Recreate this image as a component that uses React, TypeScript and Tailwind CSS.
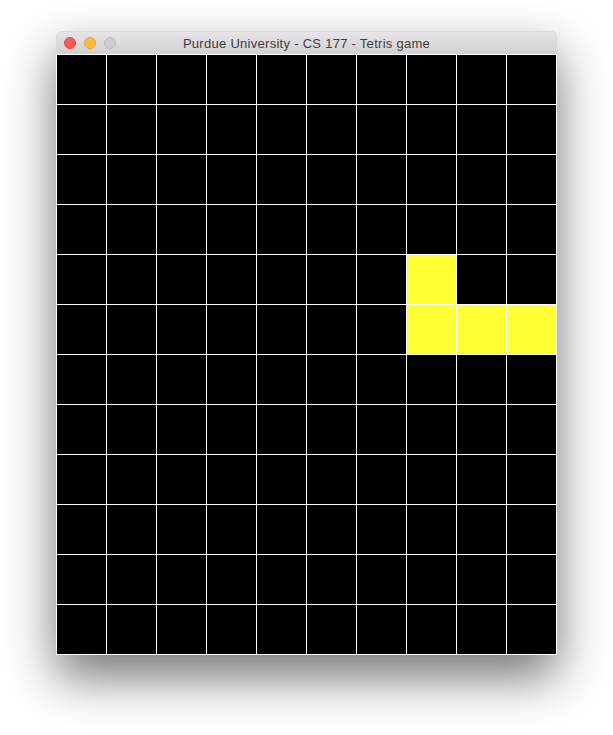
const COLS = 10;
const ROWS = 12;

// row, col of the falling piece
const YELLOW = ['4-7', '5-7', '5-8', '5-9'];

export default function App() {
  const cells: string[] = [];
  for (let r = 0; r < ROWS; r++) {
    for (let c = 0; c < COLS; c++) cells.push(`${r}-${c}`);
  }

  return (
    <div className="w-[613px] h-[735px] overflow-hidden bg-white pt-[31px] pl-[56px]">
      <div className="w-[501px] rounded-t-[5px] shadow-[0_22px_50px_0_rgba(0,0,0,0.55)]">
        {/* Title bar */}
        <div className="relative h-[23px] flex items-center justify-center rounded-t-[5px] bg-gradient-to-b from-[#e7e5e7] to-[#d1cfd1] border-t border-x border-[#dcdadc]">
          <div className="absolute left-[7px] top-[5px] flex gap-[8px]">
            <span className="w-[12px] h-[12px] rounded-full bg-[#fc5c57] border border-[#e5484a]" />
            <span className="w-[12px] h-[12px] rounded-full bg-[#fdbc3f] border border-[#e0a02f]" />
            <span className="w-[12px] h-[12px] rounded-full bg-[#cfcdcf] border border-[#bcbabc]" />
          </div>
          <span className="text-[13px] leading-none tracking-[0.28px] text-[#3f3d3f] font-['Liberation_Sans',sans-serif]">
            Purdue University - CS 177 - Tetris game
          </span>
        </div>

        {/* Board */}
        <div className="grid grid-cols-[repeat(10,49px)] auto-rows-[49px] gap-px p-px bg-white">
          {cells.map((id) => (
            <div key={id} className={YELLOW.includes(id) ? 'bg-[#ffff33]' : 'bg-black'} />
          ))}
        </div>
      </div>
    </div>
  );
}
